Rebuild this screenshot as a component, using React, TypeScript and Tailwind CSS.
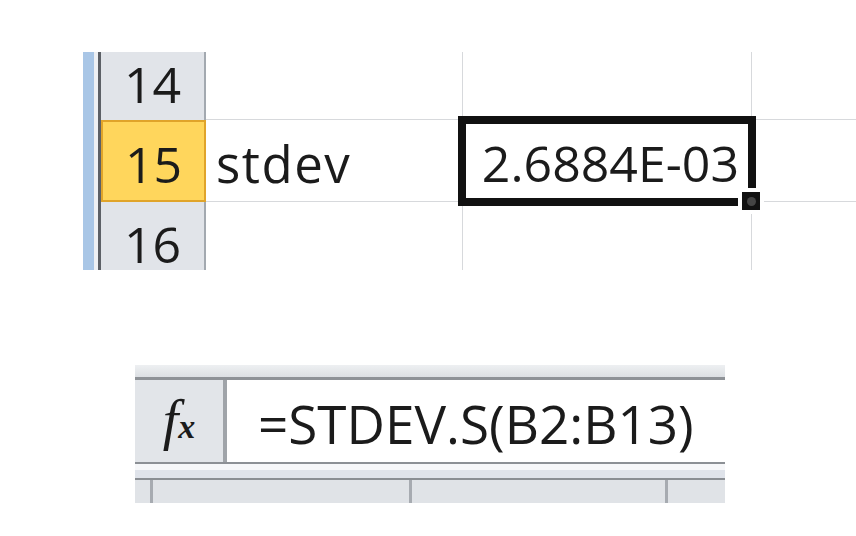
import React from "react";

const font = { fontFamily: '"Open Sans", "Liberation Sans", sans-serif' };

export default function App() {
  return (
    <div className="w-[856px] h-[536px] bg-white overflow-hidden text-[#1b1b1b]" style={font}>
      {/* Spreadsheet fragment */}
      <div className="pt-[52px] pl-[83px] flex">
        <div className="w-[11px] h-[218px] bg-[#a9c6e6]" />
        <div className="w-[4px] h-[218px] bg-[#eef0f3]" />
        <div className="w-[3px] h-[218px] bg-[#5c6066]" />
        <div className="flex flex-col flex-1">
          {/* Row 14 */}
          <div className="flex h-[68px]">
            <div className="w-[105px] bg-[#e1e4e9] border-r-2 border-[#a3a9b0] flex items-center justify-center pb-[4px] text-[50px] leading-none">
              14
            </div>
            <div className="w-[257px] border-r border-b border-[#d7d9dc]" />
            <div className="w-[289px] border-r border-b border-[#d7d9dc]" />
            <div className="flex-1 border-b border-[#d7d9dc]" />
          </div>
          {/* Row 15 */}
          <div className="flex h-[82px]">
            <div className="w-[105px] bg-[#ffd65c] border-2 border-[#e0a42a] flex items-center justify-center pt-[5px] text-[50px] leading-none">
              15
            </div>
            <div className="w-[257px] border-r border-b border-[#d7d9dc] flex items-center pl-[10px] pt-[5px] text-[51px] tracking-[1.5px] leading-none">
              stdev
            </div>
            <div className="relative w-[289px] border-r border-b border-[#d7d9dc] flex items-center justify-end pr-[12px] pt-[5px] text-[50px] leading-none">
              2.6884E-03
              <div className="absolute left-[-5px] top-[-4px] w-[298px] h-[90px] border-[8px] border-[#111]" />
              <div className="absolute left-[275px] top-[68px] w-[26px] h-[26px] border-[4px] border-white bg-[#111] flex items-center justify-center">
                <div className="w-[9px] h-[9px] rounded-full bg-[#444]" />
              </div>
            </div>
            <div className="flex-1 border-b border-[#d7d9dc]" />
          </div>
          {/* Row 16 */}
          <div className="flex h-[68px]">
            <div className="w-[105px] bg-[#e1e4e9] border-r-2 border-[#a3a9b0] flex items-center justify-center pt-[15px] text-[50px] leading-none">
              16
            </div>
            <div className="w-[257px] border-r border-[#d7d9dc]" />
            <div className="w-[289px] border-r border-[#d7d9dc]" />
            <div className="flex-1" />
          </div>
        </div>
      </div>

      {/* Formula bar fragment */}
      <div className="mt-[95px] ml-[135px] w-[590px] flex flex-col">
        <div className="h-[12px] bg-gradient-to-b from-[#eef0f2] to-[#dcdfe3]" />
        <div className="h-[3px] bg-[#8e9297]" />
        <div className="h-[82px] flex">
          <div className="w-[92px] bg-[#e2e5e9] border-r-[4px] border-[#a0a4a9] flex items-center justify-center pb-[2px]">
            <span
              className="italic text-[56px] leading-none"
              style={{ fontFamily: '"Liberation Serif", serif' }}
            >
              f
            </span>
            <span
              className="italic text-[34px] leading-none mt-[14px] font-bold"
              style={{ fontFamily: '"Liberation Serif", serif' }}
            >
              x
            </span>
          </div>
          <div className="flex-1 bg-white flex items-center pl-[31px] pt-[4px] text-[53px] leading-none">
            =STDEV.S(B2:B13)
          </div>
        </div>
        <div className="h-[2px] bg-[#8c9095]" />
        <div className="h-[6px] bg-[#f6f7f9]" />
        <div className="h-[8px] bg-[#dfe3ea]" />
        <div className="h-[2px] bg-[#8a8e93]" />
        <div className="h-[23px] bg-[#e0e3e7] flex">
          <div className="w-[15px]" />
          <div className="w-[3px] bg-[#a7abb1]" />
          <div className="w-[256px]" />
          <div className="w-[3px] bg-[#a7abb1]" />
          <div className="w-[253px]" />
          <div className="w-[3px] bg-[#a7abb1]" />
          <div className="flex-1" />
        </div>
      </div>
    </div>
  );
}
